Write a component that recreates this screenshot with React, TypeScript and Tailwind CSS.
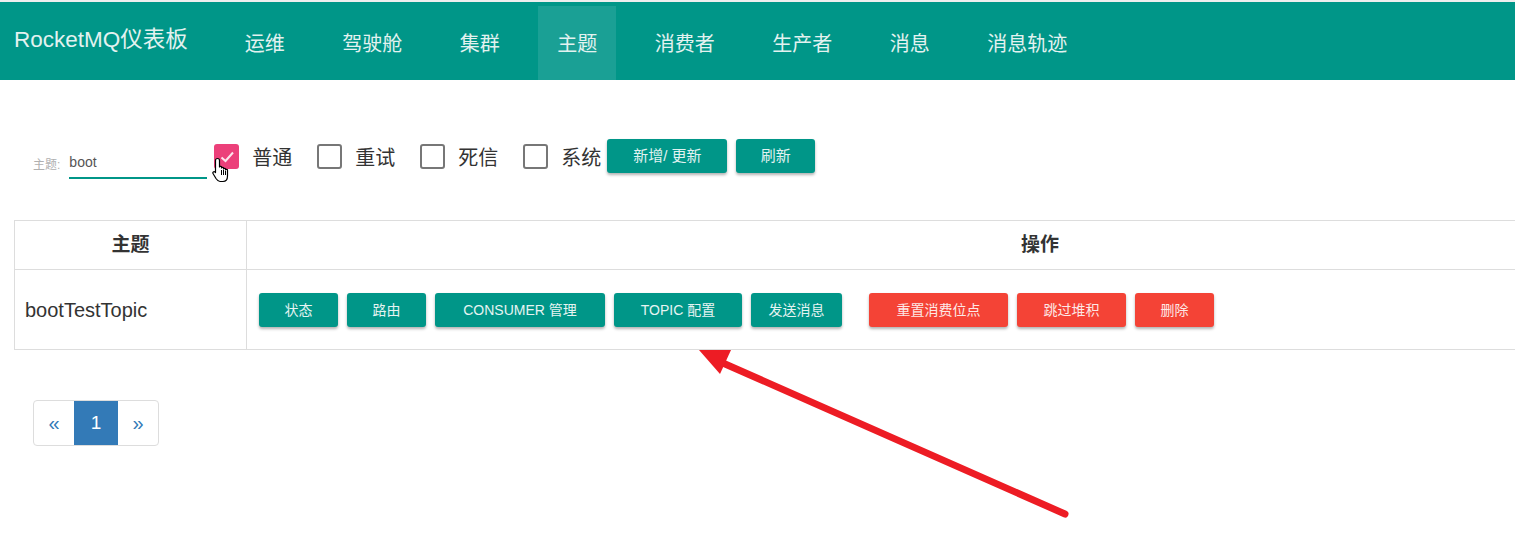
import { useState } from "react";

const navItems = ["运维", "驾驶舱", "集群", "主题", "消费者", "生产者", "消息", "消息轨迹"];

const typeFilters = [
  { label: "普通", checked: true },
  { label: "重试", checked: false },
  { label: "死信", checked: false },
  { label: "系统", checked: false },
];

type RowButton = {
  label: string;
  width: string;
  danger?: boolean;
  gap?: string;
};

const rowButtons: RowButton[] = [
  { label: "状态", width: "w-[79px]" },
  { label: "路由", width: "w-[79px]" },
  { label: "CONSUMER 管理", width: "w-[170px]" },
  { label: "TOPIC 配置", width: "w-[128px]" },
  { label: "发送消息", width: "w-[91px]" },
  { label: "重置消费位点", width: "w-[139px]", danger: true, gap: "ml-[18px]" },
  { label: "跳过堆积", width: "w-[109px]", danger: true },
  { label: "删除", width: "w-[79px]", danger: true },
];

function Checkbox({ checked }: { checked: boolean }) {
  if (checked) {
    return (
      <span className="flex h-[25px] w-[25px] items-center justify-center rounded-[3px] bg-[#ec407a]">
        <svg width="18" height="18" viewBox="0 0 18 18">
          <path d="M3.5 9.5 L7.5 13 L15 4.5" fill="none" stroke="#fde4ec" strokeWidth="2" />
        </svg>
      </span>
    );
  }
  return <span className="block h-[25px] w-[25px] rounded-[3px] border-2 border-[#777]" />;
}

function HandCursor() {
  return (
    <svg className="absolute left-[212px] top-[157px]" width="19" height="27" viewBox="0 0 19 27">
      <path
        d="M5.5 1.5 C6.6 1.5 7.5 2.4 7.5 3.5 V10 C7.5 9 9.5 9 9.5 10 V11 C9.5 10 11.5 10 11.5 11 V12 C11.5 11 13.5 11 13.5 12 V13 C13.5 12 15.5 12 15.5 13 V19 C15.5 22 14 24.5 11 24.5 H8 C6 24.5 5 23 4 21.5 L1 16.5 C0.3 15.3 1.8 14 3 15 L3.5 15.5 V3.5 C3.5 2.4 4.4 1.5 5.5 1.5 Z"
        fill="#fff"
        stroke="#000"
        strokeWidth="1.2"
        strokeLinejoin="round"
      />
      <path d="M9.5 13 V18 M11.5 13 V18 M13.5 14 V18" stroke="#000" strokeWidth="1" />
    </svg>
  );
}

function Arrow() {
  return (
    <svg className="pointer-events-none absolute left-0 top-0" width="1515" height="551">
      <line x1="1065" y1="514" x2="716" y2="360" stroke="#ed1c24" strokeWidth="7" strokeLinecap="round" />
      <polygon points="699,350 731,350 720,374" fill="#ed1c24" />
    </svg>
  );
}

export default function App() {
  const [topic, setTopic] = useState("boot");

  return (
    <div
      className="relative h-[551px] w-[1515px] overflow-hidden bg-white"
      style={{ fontFamily: '"Liberation Sans", "Noto Sans CJK SC", sans-serif' }}
    >
      <div className="h-[2px] bg-[#eeeeee]" />
      <header className="flex h-[78px] items-stretch bg-[#009688] text-[#e3f2f0]">
        <div className="flex items-center pb-[2px] pl-[14px] text-[22.5px]">RocketMQ仪表板</div>
        <nav className="ml-[38px] flex items-stretch gap-[19.5px] pt-[4px]">
          {navItems.map((item) => (
            <div
              key={item}
              className={
                item === "主题"
                  ? "flex items-center bg-[#1aa095] px-[19px] pt-[2px] text-[20px]"
                  : "flex items-center px-[19px] pt-[2px] text-[20px]"
              }
            >
              {item}
            </div>
          ))}
        </nav>
      </header>

      <div className="mt-[59px] flex h-[40px] items-start">
        <div className="ml-[33px] flex h-[40px] items-end">
          <span className="mb-[5px] mr-[9px] text-[12px] text-[#b0b0b0]">主题:</span>
          <input
            value={topic}
            onChange={(e) => setTopic(e.target.value)}
            className="w-[138px] border-b-2 border-[#009688] pb-[4px] text-[14px] text-[#555] outline-none"
          />
        </div>
        <div className="ml-[7px] mt-[4px] flex items-center">
          {typeFilters.map((f, i) => (
            <label key={f.label} className={i === 0 ? "flex items-center" : "ml-[25px] flex items-center"}>
              <span className="-mt-[3px]">
                <Checkbox checked={f.checked} />
              </span>
              <span className="ml-[13px] text-[20px] text-[#333]">{f.label}</span>
            </label>
          ))}
        </div>
        <button className="ml-[6px] h-[34px] w-[120px] rounded-[3px] bg-[#009688] text-[15px] text-[#e0f2f1] shadow-[0_2px_3px_rgba(0,0,0,0.3)]">
          新增/ 更新
        </button>
        <button className="ml-[9px] h-[34px] w-[79px] rounded-[3px] bg-[#009688] text-[15px] text-[#e0f2f1] shadow-[0_2px_3px_rgba(0,0,0,0.3)]">
          刷新
        </button>
      </div>

      <table className="ml-[14px] mt-[41px] w-[1820px] border-collapse">
        <thead>
          <tr className="h-[49px]">
            <th className="w-[232px] border border-[#dddddd] text-[19px] font-bold text-[#333]">主题</th>
            <th className="border border-[#dddddd] text-[19px] font-bold text-[#333]">操作</th>
          </tr>
        </thead>
        <tbody>
          <tr className="h-[80px]">
            <td className="border border-[#dddddd] pl-[10px] text-[20px] text-[#333]">bootTestTopic</td>
            <td className="border border-[#dddddd] pl-[12px]">
              <div className="flex items-center gap-[9px]">
                {rowButtons.map((b) => (
                  <button
                    key={b.label}
                    className={[
                      "h-[34px] rounded-[3px] pt-[1px] text-[14px] text-[#e6f4f2] shadow-[0_2px_3px_rgba(0,0,0,0.3)]",
                      b.width,
                      b.danger ? "bg-[#f44336] text-[#fde8e6]" : "bg-[#009688]",
                      b.gap ?? "",
                    ].join(" ")}
                  >
                    {b.label}
                  </button>
                ))}
              </div>
            </td>
          </tr>
        </tbody>
      </table>

      <div className="ml-[33px] mt-[50px] flex h-[46px] w-[126px] overflow-hidden rounded-[4px] border border-[#dddddd] text-[#337ab7]">
        <span className="flex w-[40px] items-center justify-center text-[20px]">«</span>
        <span className="flex w-[44px] items-center justify-center bg-[#337ab7] text-[19px] text-white">1</span>
        <span className="flex flex-1 items-center justify-center text-[20px]">»</span>
      </div>

      <HandCursor />
      <Arrow />
    </div>
  );
}
